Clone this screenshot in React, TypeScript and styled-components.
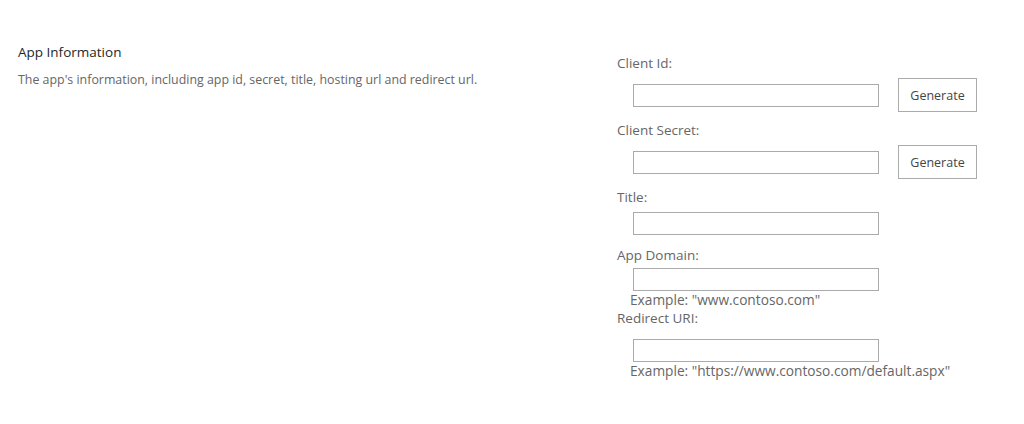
import React from 'react';
import styled, { createGlobalStyle } from 'styled-components';

const GlobalStyle = createGlobalStyle`
    html, body {
        margin: 0;
        padding: 0;
        background: #ffffff;
    }
    body {
        font-family: "Open Sans", "Noto Sans", "Liberation Sans", sans-serif;
    }
`;

const Page = styled.div`
    display: flex;
    width: 1024px;
    height: 424px;
    padding-top: 43px;
    box-sizing: border-box;
`;

const InfoColumn = styled.div`
    width: 599px;
    padding-left: 18px;
    box-sizing: content-box;
`;

const SectionTitle = styled.h3`
    margin: 0;
    font-size: 13.5px;
    font-weight: 400;
    line-height: 18px;
    color: #262626;
`;

const SectionText = styled.p`
    margin: 10px 0 0;
    font-size: 12.4px;
    line-height: 18px;
    color: #666666;
`;

const FormColumn = styled.div`
    display: flex;
    flex-direction: column;
    padding-top: 11px;
`;

const FieldLabel = styled.label<{ $top?: number }>`
    display: block;
    margin-top: ${p => p.$top ?? 0}px;
    font-size: 13.5px;
    line-height: 18px;
    color: #666666;
`;

const FieldRow = styled.div<{ $top?: number }>`
    display: flex;
    align-items: center;
    margin-top: ${p => p.$top ?? 0}px;
    padding-left: 16px;
`;

const TextBox = styled.input`
    width: 246px;
    height: 23px;
    margin: 0;
    padding: 0 4px;
    box-sizing: border-box;
    border: 1px solid #ababab;
    border-radius: 0;
    background: #ffffff;
    font: inherit;
    font-size: 13px;
    outline: none;
`;

const GenerateButton = styled.button`
    width: 79px;
    height: 34px;
    margin-left: 19px;
    padding: 0;
    box-sizing: border-box;
    border: 1px solid #ababab;
    border-radius: 0;
    background: #ffffff;
    font-family: inherit;
    font-size: 12.5px;
    color: #444444;
    cursor: pointer;
`;

const Hint = styled.div`
    padding-left: 13px;
    font-size: 13.7px;
    line-height: 18px;
    color: #666666;
`;

export default function App() {
    return (
        <>
            <GlobalStyle />
            <Page>
                <InfoColumn>
                    <SectionTitle>App Information</SectionTitle>
                    <SectionText>
                        The app's information, including app id, secret, title, hosting url and redirect url.
                    </SectionText>
                </InfoColumn>
                <FormColumn>
                    <FieldLabel>Client Id:</FieldLabel>
                    <FieldRow $top={6}>
                        <TextBox type="text" />
                        <GenerateButton>Generate</GenerateButton>
                    </FieldRow>
                    <FieldLabel $top={9}>Client Secret:</FieldLabel>
                    <FieldRow $top={6}>
                        <TextBox type="text" />
                        <GenerateButton>Generate</GenerateButton>
                    </FieldRow>
                    <FieldLabel $top={9}>Title:</FieldLabel>
                    <FieldRow $top={6}>
                        <TextBox type="text" />
                    </FieldRow>
                    <FieldLabel $top={11}>App Domain:</FieldLabel>
                    <FieldRow $top={4}>
                        <TextBox type="text" />
                    </FieldRow>
                    <Hint>Example: "www.contoso.com"</Hint>
                    <FieldLabel>Redirect URI:</FieldLabel>
                    <FieldRow $top={12}>
                        <TextBox type="text" />
                    </FieldRow>
                    <Hint>Example: "https://www.contoso.com/default.aspx"</Hint>
                </FormColumn>
            </Page>
        </>
    );
}
